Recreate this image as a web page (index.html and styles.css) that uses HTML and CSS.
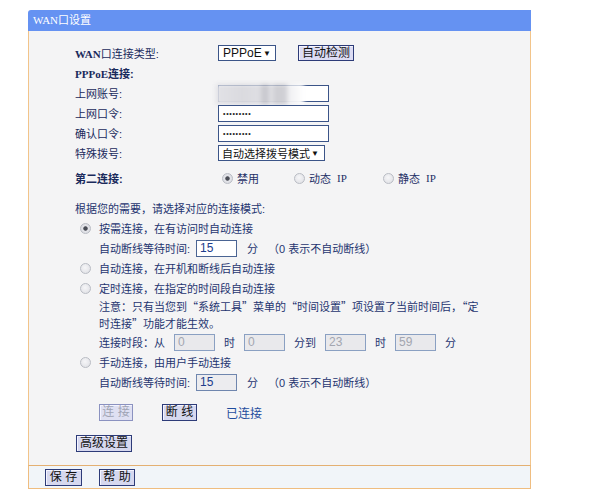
FILE: index.html
```html
<!DOCTYPE html>
<html lang="zh-CN">
<head>
<meta charset="utf-8">
<title>WAN口设置</title>
<link rel="stylesheet" href="styles.css">
</head>
<body>
<div class="panel">
  <div class="title"><span class="ser">WAN</span>口设置</div>
  <div class="body">
    <div class="row">
      <div class="lbl"><span class="ser b">WAN</span>口连接类型:</div>
      <div class="select w58"><span>PPPoE</span><span class="arrow">▼</span></div>
      <button class="btn detect">自动检测</button>
    </div>
    <div class="row">
      <div class="lbl b"><span class="ser">PPPoE</span>连接:</div>
    </div>
    <div class="row">
      <div class="lbl">上网账号:</div>
      <div class="field acct"><div class="blur"></div></div>
    </div>
    <div class="row">
      <div class="lbl">上网口令:</div>
      <div class="field"><span class="dots">•••••••••</span></div>
    </div>
    <div class="row">
      <div class="lbl">确认口令:</div>
      <div class="field"><span class="dots">•••••••••</span></div>
    </div>
    <div class="row">
      <div class="lbl">特殊拨号:</div>
      <div class="select w107 cjk"><span>自动选择拨号模式</span><span class="arrow">▼</span></div>
    </div>
    <div class="row second">
      <div class="lbl b">第二连接:</div>
      <div class="opt o72"><span class="radio on"></span>禁用</div>
      <div class="opt o89"><span class="radio"></span>动态<span class="ser ip">IP</span></div>
      <div class="opt"><span class="radio"></span>静态<span class="ser ip">IP</span></div>
    </div>

    <div class="mode">
      <div class="row">根据您的需要，请选择对应的连接模式:</div>
      <div class="row rrow"><span class="radio on"></span>按需连接，在有访问时自动连接</div>
      <div class="row sub">
        <span class="wlbl">自动断线等待时间:</span>
        <div class="inp">15</div>
        <span class="unit">分</span>
        <span class="hint">（0 表示不自动断线）</span>
      </div>
      <div class="row rrow"><span class="radio"></span>自动连接，在开机和断线后自动连接</div>
      <div class="row rrow"><span class="radio"></span>定时连接，在指定的时间段自动连接</div>
      <div class="note">注意：只有当您到“系统工具”菜单的“时间设置”项设置了当前时间后，“定<br>时连接”功能才能生效。</div>
      <div class="row sub times">
        <span>连接时段：从</span>
        <div class="inp dis">0</div>
        <span>时</span>
        <div class="inp dis">0</div>
        <span>分到</span>
        <div class="inp dis">23</div>
        <span>时</span>
        <div class="inp dis">59</div>
        <span>分</span>
      </div>
      <div class="row rrow"><span class="radio"></span>手动连接，由用户手动连接</div>
      <div class="row sub">
        <span class="wlbl">自动断线等待时间:</span>
        <div class="inp gray">15</div>
        <span class="unit">分</span>
        <span class="hint">（0 表示不自动断线）</span>
      </div>
      <div class="row sub actions">
        <button class="btn off">连 接</button>
        <button class="btn">断 线</button>
        <span class="status">已连接</span>
      </div>
      <div class="row adv">
        <button class="btn">高级设置</button>
      </div>
    </div>
  </div>
  <div class="foot">
    <button class="btn save">保 存</button>
    <button class="btn">帮 助</button>
  </div>
</div>
</body>
</html>
```
FILE: styles.css
```css
html, body {
  margin: 0;
  padding: 0;
  background: #ffffff;
}
body {
  font-family: "Liberation Sans", "Noto Sans CJK SC", sans-serif;
  font-size: 11px;
  color: #1e2f66;
}
.ser {
  font-family: "Liberation Serif", "Noto Sans CJK SC", serif;
}
.b { font-weight: bold; }

.panel {
  margin: 10px 0 0 28px;
  width: 503px;
}
.title {
  height: 21px;
  line-height: 21px;
  background: #6592f2;
  color: #ffffff;
  padding-left: 5px;
  border-radius: 3px 0 0 0;
  font-size: 11px;
}
.body {
  background: #f4f4f5;
  border-left: 1px solid #f2c48a;
  border-right: 1px solid #f2c48a;
  padding: 12px 0 12px 46px;
}
.row {
  display: flex;
  align-items: center;
  height: 20px;
  white-space: nowrap;
}
.lbl {
  width: 143px;
  color: #1a2a5c;
}
.second { margin-top: 5px; }

.select {
  box-sizing: border-box;
  height: 16px;
  background: #ffffff;
  border: 1px solid #3b5488;
  display: flex;
  align-items: center;
  justify-content: space-between;
  padding: 0 4px 0 4px;
  color: #111;
  font-size: 12px;
}
.select.cjk {
  font-size: 11px;
  padding: 0 5px 0 3px;
}
.w58 { width: 58px; }
.w107 { width: 107px; }
.arrow {
  font-size: 8px;
  color: #111;
}

.btn {
  box-sizing: border-box;
  height: 17px;
  padding: 0 3px;
  margin: 0;
  font-family: "Liberation Sans", "Noto Sans CJK SC", sans-serif;
  font-size: 12px;
  line-height: 14px;
  color: #111;
  background: #d6d8ef;
  border: 1px solid #2d3b78;
  box-shadow: inset 1px 1px 0 #f4f4ff;
  cursor: default;
}
.detect {
  margin-left: 22px;
  width: 56px;
  height: 16px;
  background: #dcdcf3;
}
.btn.off {
  color: #a0a4b4;
  border-color: #8b92c0;
  background: #dfe0f2;
}

.field {
  position: relative;
  box-sizing: border-box;
  width: 111px;
  height: 17px;
  background: #ffffff;
  border: 1px solid #3b5488;
  display: flex;
  align-items: center;
  padding-left: 4px;
}
.dots {
  font-size: 7px;
  letter-spacing: 0.7px;
  color: #222;
}
.blur {
  position: absolute;
  left: -3px;
  top: -2px;
  width: 88px;
  height: 21px;
  background:
    linear-gradient(90deg, transparent 0, transparent 44px, #c9c9cf 46px, #c9c9cf 52px, transparent 54px, transparent 56px, #cfcfd4 58px, #cfcfd4 70px, transparent 72px),
    linear-gradient(90deg, #e2e2e6 0, #dadadf 30%, #e4e4e8 70%, #ffffff 100%);
  filter: blur(2px);
}

.opt {
  display: flex;
  align-items: center;
  color: #1e2f66;
}
.opt .radio { margin-right: 4px; }
.o72 { width: 72px; margin-left: 4px; }
.o89 { width: 89px; }
.ip { margin-left: 6px; }

.radio {
  box-sizing: border-box;
  display: inline-block;
  width: 11px;
  height: 11px;
  border-radius: 50%;
  border: 1px solid #b9bcc4;
  background: radial-gradient(circle at 45% 40%, #f6f6f8 0, #dcdde2 100%);
  flex: none;
}
.radio.on {
  background: radial-gradient(circle, #4a4d56 0, #4a4d56 1.8px, #e4e5ea 2.6px, #d6d7dd 100%);
}

.mode {
  margin-top: 10px;
  color: #1f3470;
}
.rrow { padding-left: 5px; }
.rrow .radio { margin-right: 8px; }
.sub { padding-left: 24px; }
.wlbl { width: 97px; }
.inp {
  box-sizing: border-box;
  width: 41px;
  height: 17px;
  background: #ffffff;
  border: 1px solid #4a6493;
  padding-left: 3px;
  font-size: 12px;
  line-height: 15px;
  color: #203c8c;
}
.inp.gray { background: #ececef; border-color: #6f86ae; }
.inp.dis {
  background: #e9e9ec;
  border-color: #8aa0c2;
  color: #a3a6b0;
}
.unit { margin-left: 10px; }
.hint { margin-left: 10px; }
.note {
  padding-left: 24px;
  line-height: 17px;
  white-space: nowrap;
  font-family: "Noto Sans CJK SC", sans-serif;
}
.times { gap: 9px; }
.times > span:first-child { width: 66px; }

.actions { margin-top: 10px; }
.actions .btn { width: 34px; padding: 0; }
.actions .btn + .btn { margin-left: 29px; width: 35px; }
.status { margin-left: 29px; color: #1f4c9e; font-size: 12px; }

.adv { margin-top: 11px; padding-left: 1px; }
.adv .btn { width: 56px; }

.foot {
  box-sizing: border-box;
  height: 24px;
  background: #f1f5f9;
  border: 1px solid #efbd80;
  border-top-color: #e4b072;
  display: flex;
  align-items: center;
  padding-left: 16px;
}
.foot .btn { width: 36px; padding: 0; }
.foot .save { margin-right: 17px; width: 37px; }
```
